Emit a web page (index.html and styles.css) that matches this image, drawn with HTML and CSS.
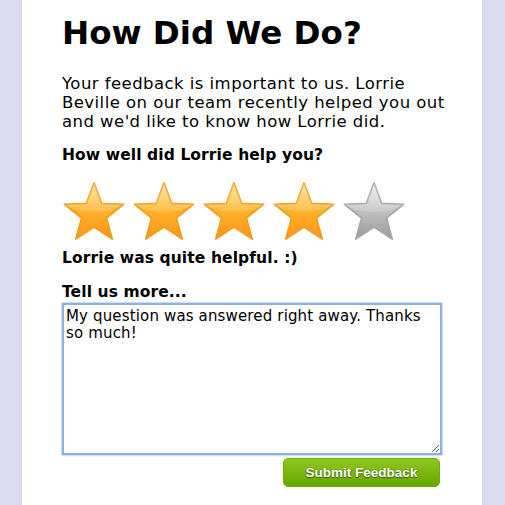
FILE: index.html
```html
<!DOCTYPE html>
<html lang="en">
<head>
  <meta charset="UTF-8">
  <title>How Did We Do?</title>
  <link rel="stylesheet" href="styles.css">
</head>
<body>
  <svg class="defs" width="0" height="0" aria-hidden="true">
    <defs>
      <linearGradient id="gold" x1="0" y1="0" x2="0" y2="1">
        <stop offset="0" stop-color="#ffd865"/>
        <stop offset="0.45" stop-color="#ffb52c"/>
        <stop offset="1" stop-color="#ff9418"/>
      </linearGradient>
      <linearGradient id="grey" x1="0" y1="0" x2="0" y2="1">
        <stop offset="0" stop-color="#e8e8e8"/>
        <stop offset="0.45" stop-color="#c4c4c4"/>
        <stop offset="1" stop-color="#9a9a9a"/>
      </linearGradient>
      <linearGradient id="gloss" x1="0" y1="0" x2="0" y2="1">
        <stop offset="0" stop-color="#fff" stop-opacity="0.55"/>
        <stop offset="1" stop-color="#fff" stop-opacity="0.15"/>
      </linearGradient>
      <clipPath id="starclip">
        <polygon points="32,3 39.6,23.5 61.5,24.4 44.4,38 50.2,59.1 32,47 13.8,59.1 19.6,38 2.5,24.4 24.4,23.5"/>
      </clipPath>
      <symbol id="star-on" viewBox="0 0 64 62">
        <polygon points="32,3 39.6,23.5 61.5,24.4 44.4,38 50.2,59.1 32,47 13.8,59.1 19.6,38 2.5,24.4 24.4,23.5" fill="url(#gold)" stroke="#eea020" stroke-width="1.8" stroke-linejoin="round"/>
        <ellipse cx="32" cy="6" rx="42" ry="26" fill="url(#gloss)" clip-path="url(#starclip)"/>
      </symbol>
      <symbol id="star-off" viewBox="0 0 64 62">
        <polygon points="32,3 39.6,23.5 61.5,24.4 44.4,38 50.2,59.1 32,47 13.8,59.1 19.6,38 2.5,24.4 24.4,23.5" fill="url(#grey)" stroke="#a8a8a8" stroke-width="1.8" stroke-linejoin="round"/>
        <ellipse cx="32" cy="6" rx="42" ry="26" fill="url(#gloss)" clip-path="url(#starclip)"/>
      </symbol>
    </defs>
  </svg>

  <div class="page">
    <h1>How Did We Do?</h1>

    <p class="intro">Your feedback is important to us. Lorrie Beville on our team recently helped you out and we'd like to know how Lorrie did.</p>

    <form onsubmit="return false;">
      <label class="question">How well did Lorrie help you?</label>
      <div class="stars">
        <svg class="star" width="64" height="62"><use href="#star-on"/></svg>
        <svg class="star" width="64" height="62"><use href="#star-on"/></svg>
        <svg class="star" width="64" height="62"><use href="#star-on"/></svg>
        <svg class="star" width="64" height="62"><use href="#star-on"/></svg>
        <svg class="star" width="64" height="62"><use href="#star-off"/></svg>
      </div>
      <div class="rating-text">Lorrie was quite helpful. :)</div>

      <label class="question more" for="comments">Tell us more...</label>
      <textarea id="comments">My question was answered right away. Thanks so much!</textarea>

      <div class="actions">
        <button type="submit">Submit Feedback</button>
      </div>
    </form>
  </div>
</body>
</html>
```

FILE: styles.css
```css
body { margin: 0; background: #dcdbee; font-family: "DejaVu Sans", Verdana, sans-serif; color: #000; }
.defs { position: absolute; }
.page { width: 420px; min-height: 100vh; margin: 0 0 0 22px; padding: 14px 0 0 40px; background: #fff; }
h1 { margin: 0; font-size: 32.5px; line-height: 38px; font-weight: bold; }
.intro { margin: 22px 0 0; font-size: 16.5px; letter-spacing: 0.45px; line-height: 19px; width: 390px; }
form { display: flex; flex-direction: column; width: 380px; }
.question, .rating-text { display: block; font-size: 15.5px; line-height: 19px; font-weight: bold; letter-spacing: 0.1px; }
.question { margin-top: 15px; }
.stars { display: flex; gap: 6px; margin-top: 15px; }
.star { display: block; }
.rating-text { margin-top: 7px; }
.more { margin-top: 15px; }
textarea { margin-top: 1px; width: 380px; height: 152px; box-sizing: border-box; padding: 3px 2px; border: 2px solid #8cb2e0; box-shadow: 0 0 2px #6a9ad4; outline: none; font-family: "DejaVu Sans", Verdana, sans-serif; font-size: 15px; letter-spacing: 0.15px; line-height: 17px; color: #000; }
.actions { display: flex; justify-content: flex-end; margin-top: 3px; padding-right: 2px; }
button { width: 157px; height: 29px; border: 1px solid #72ab08; border-radius: 5px; background: linear-gradient(#8fc81e, #68a400); color: #fff; font-family: "Liberation Sans", Arial, sans-serif; font-size: 13.5px; font-weight: bold; text-shadow: 0 0 1px #3d6000, 0 1px 1px #3d6000; padding: 0; }
```
